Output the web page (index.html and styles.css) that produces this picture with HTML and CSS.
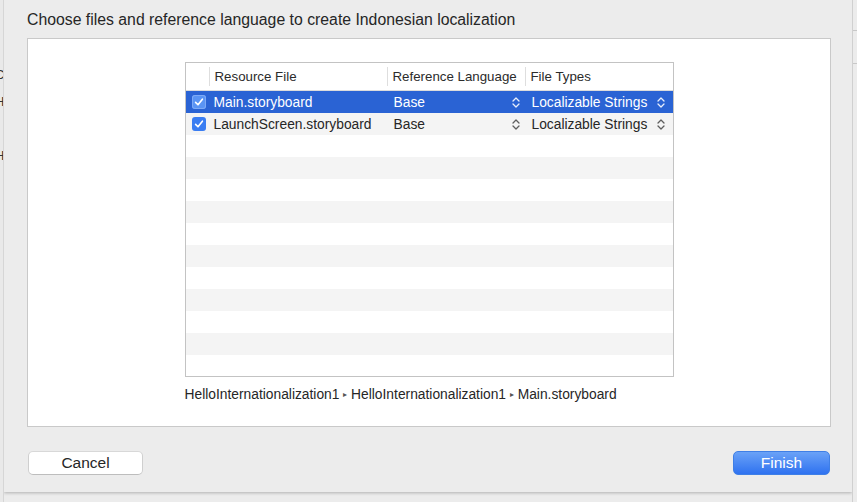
FILE: index.html
```html
<!DOCTYPE html>
<html>
<head>
<meta charset="utf-8">
<link rel="stylesheet" href="styles.css">
</head>
<body>
<div class="screen">
  <div class="backdrop-left">
    <span class="bl-glyph g1">C</span>
    <span class="bl-glyph g2">H</span>
    <span class="bl-glyph g3">-</span>
    <span class="bl-glyph g4">H</span>
  </div>
  <div class="dialog">
    <div class="title">Choose files and reference language to create Indonesian localization</div>
    <div class="panel">
      <div class="content">
        <div class="table">
          <div class="row header">
            <div class="cell c0"></div>
            <div class="cell c1"><span class="sep"></span>Resource File</div>
            <div class="cell c2"><span class="sep"></span>Reference Language</div>
            <div class="cell c3"><span class="sep"></span>File Types</div>
          </div>
          <div class="row selected">
            <div class="cell c0"><span class="check"><svg viewBox="0 0 14 14" width="14" height="14"><path d="M3.6 7.4 L6 9.8 L10.4 4.2" fill="none" stroke="#fff" stroke-width="1.6" stroke-linecap="round" stroke-linejoin="round"/></svg></span></div>
            <div class="cell c1">Main.storyboard</div>
            <div class="cell c2 pop">Base<svg class="step" viewBox="0 0 8 13" width="8" height="13"><path d="M1 5 L4 2 L7 5 M1 8 L4 11 L7 8" fill="none" stroke="currentColor" stroke-width="1.3" stroke-linecap="round" stroke-linejoin="round"/></svg></div>
            <div class="cell c3 pop">Localizable Strings<svg class="step" viewBox="0 0 8 13" width="8" height="13"><path d="M1 5 L4 2 L7 5 M1 8 L4 11 L7 8" fill="none" stroke="currentColor" stroke-width="1.3" stroke-linecap="round" stroke-linejoin="round"/></svg></div>
          </div>
          <div class="row alt">
            <div class="cell c0"><span class="check"><svg viewBox="0 0 14 14" width="14" height="14"><path d="M3.6 7.4 L6 9.8 L10.4 4.2" fill="none" stroke="#fff" stroke-width="1.6" stroke-linecap="round" stroke-linejoin="round"/></svg></span></div>
            <div class="cell c1">LaunchScreen.storyboard</div>
            <div class="cell c2 pop">Base<svg class="step" viewBox="0 0 8 13" width="8" height="13"><path d="M1 5 L4 2 L7 5 M1 8 L4 11 L7 8" fill="none" stroke="currentColor" stroke-width="1.3" stroke-linecap="round" stroke-linejoin="round"/></svg></div>
            <div class="cell c3 pop">Localizable Strings<svg class="step" viewBox="0 0 8 13" width="8" height="13"><path d="M1 5 L4 2 L7 5 M1 8 L4 11 L7 8" fill="none" stroke="currentColor" stroke-width="1.3" stroke-linecap="round" stroke-linejoin="round"/></svg></div>
          </div>
          <div class="row"></div>
          <div class="row alt"></div>
          <div class="row"></div>
          <div class="row alt"></div>
          <div class="row"></div>
          <div class="row alt"></div>
          <div class="row"></div>
          <div class="row alt"></div>
          <div class="row"></div>
          <div class="row alt"></div>
          <div class="row last"></div>
        </div>
        <div class="path">HelloInternationalization1 <span class="tri">▸</span> HelloInternationalization1 <span class="tri">▸</span> Main.storyboard</div>
      </div>
    </div>
    <div class="buttons">
      <button class="btn cancel">Cancel</button>
      <button class="btn finish">Finish</button>
    </div>
  </div>
  <div class="backdrop-right">
    <span class="rl r1"></span>
    <span class="rl r2"></span>
  </div>
</div>
</body>
</html>
```

FILE: styles.css
```css
* { box-sizing: border-box; }
html, body {
  margin: 0;
  padding: 0;
}
body {
  width: 857px;
  height: 502px;
  overflow: hidden;
  background: #e6e6e6;
  font-family: "Liberation Sans", Arial, sans-serif;
  color: #222;
}
.screen {
  display: flex;
  height: 502px;
  align-items: flex-start;
  background: #ececec;
}
.backdrop-left {
  width: 4px;
  height: 502px;
  position: relative;
  background: #e9e9e9;
  border-right: 1px solid #d6d6d6;
  overflow: hidden;
}
.bl-glyph {
  position: absolute;
  left: -5px;
  font-size: 13px;
  color: #333;
}
.g1 { top: 67px; }
.g2 { top: 94px; }
.g3 { top: 117px; }
.g4 { top: 148px; }
.dialog {
  width: 848px;
  height: 492px;
  background: #ececec;
  padding: 0 21px 0 23px;
  display: flex;
  flex-direction: column;
  box-shadow: 0 1px 3px rgba(0,0,0,0.25);
}
.title {
  height: 38px;
  line-height: 39px;
  font-size: 15.8px;
  color: #262626;
  white-space: nowrap;
}
.panel {
  height: 389px;
  background: #fff;
  border: 1px solid #c9c9c9;
  display: flex;
  justify-content: center;
  padding-top: 23px;
}
.content {
  width: 489px;
  display: flex;
  flex-direction: column;
}
.table {
  height: 315px;
  border: 1px solid #c3c3c3;
  background: #fff;
  overflow: hidden;
  font-size: 13.8px;
}
.row {
  display: grid;
  grid-template-columns: 23px 178px 138px 1fr;
  height: 22px;
  align-items: center;
  color: #262626;
}
.row.alt { background: #f4f4f4; }
.row.header {
  height: 28px;
  border-bottom: 1px solid #dcdcdc;
  background: #fff;
  color: #2b2b2b;
  font-size: 13.3px;
}
.row.selected {
  background: #2a63d4;
  color: #fff;
}
.cell {
  height: 100%;
  display: flex;
  align-items: center;
  padding-left: 5px;
  position: relative;
  white-space: nowrap;
}
.row.header .cell { padding-left: 6px; }
.sep {
  position: absolute;
  left: 0;
  top: 4px;
  bottom: 4px;
  width: 1px;
  background: #dedede;
}
.c0 { padding-left: 6px; }
.check {
  width: 14px;
  height: 14px;
  border-radius: 3px;
  background: #3a7df2;
  display: flex;
  align-items: center;
  justify-content: center;
}
.row.selected .check {
  background: #5a94f4;
  box-shadow: inset 0 0 0 1px #7eaaf6;
}
.pop {
  justify-content: space-between;
  padding-right: 5px;
  padding-left: 7px;
}
.c3.pop { padding-right: 8px; }
.step {
  color: #5e5e5e;
}
.row.selected .step { color: #e8eefb; }
.path {
  margin-top: 10px;
  font-size: 13.8px;
  line-height: 16px;
  color: #262626;
  white-space: nowrap;
}
.tri {
  font-size: 8px;
  color: #555;
  vertical-align: 2px;
}
.buttons {
  display: flex;
  justify-content: space-between;
  align-items: center;
  padding: 23px 1px 0 1px;
}
.btn {
  font-family: "Liberation Sans", Arial, sans-serif;
  font-size: 15.5px;
  height: 24px;
  border-radius: 5px;
  padding: 0;
  cursor: default;
}
.cancel {
  width: 115px;
  background: #fff;
  border: 1px solid #cfcfcf;
  border-top-color: #d8d8d8;
  border-bottom-color: #bdbdbd;
  color: #262626;
  margin-top: 1px;
}
.finish {
  width: 97px;
  border: 1px solid #3f7fe6;
  background: linear-gradient(#6aa2f7, #2f72f0);
  color: #fff;
}
.backdrop-right {
  flex: 1;
  height: 502px;
  position: relative;
  background: #ececec;
  border-left: 1px solid #d0d0d0;
}
.rl {
  position: absolute;
  left: 0;
  right: 0;
  height: 1px;
  background: #c8c8c8;
}
.r1 { top: 30px; }
.r2 { top: 63px; }
```
